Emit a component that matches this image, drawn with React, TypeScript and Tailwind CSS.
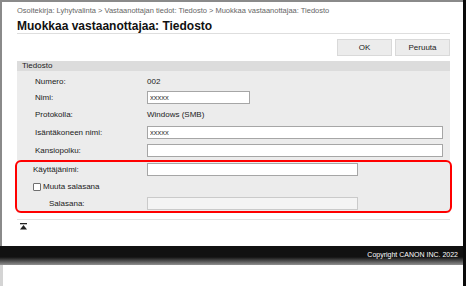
export default function App() {
  const label = "w-[130px] pl-[18px] text-[8px] leading-[10px] text-[#1a1a1a] shrink-0";
  const input = "h-[13px] border border-[#a6a6a6] bg-white px-[2px] text-[7.5px] text-[#333] outline-none font-['Liberation_Sans',Arial,sans-serif]";
  return (
    <div className="w-[466px] h-[286px] overflow-hidden bg-white flex flex-col border-r-[3px] border-[#0a0a0a] font-['Liberation_Sans',Arial,sans-serif]">
      <div className="flex-1 flex flex-col border-t-2 border-l-2 border-[#8a8a8a] pl-[15px] pr-[13px]">
        <div className="mt-[4px] h-[9px] text-[7.5px] leading-[9px] text-[#666] whitespace-nowrap">
          Osoitekirja: Lyhytvalinta &gt; Vastaanottajan tiedot: Tiedosto &gt; Muokkaa vastaanottajaa: Tiedosto
        </div>
        <div className="mt-[4px] h-[15px] border-b border-[#dedede] text-[12px] leading-[14px] font-bold text-[#111] whitespace-nowrap">
          Muokkaa vastaanottajaa: Tiedosto
        </div>
        <div className="mt-[5px] flex justify-end gap-[3px]">
          <button className="w-[55px] h-[17px] bg-[#ececec] border border-[#d9d9d9] text-[8px] text-[#222]">OK</button>
          <button className="w-[55px] h-[17px] bg-[#ececec] border border-[#d9d9d9] text-[8px] text-[#222]">Peruuta</button>
        </div>
        <div className="mt-[5px] flex flex-col">
          <div className="h-[10px] bg-[#dcdcdc] pl-[5px] text-[8px] leading-[10px] text-[#222]">Tiedosto</div>
          <div className="bg-[#ececec] flex flex-col pt-[2px]">
            <div className="h-[18px] flex items-center">
              <span className={label}>Numero:</span>
              <span className="text-[8px] text-[#222]">002</span>
            </div>
            <div className="h-[13px] flex items-center">
              <span className={label}>Nimi:</span>
              <input readOnly defaultValue="xxxxx" className={`${input} w-[103px]`} />
            </div>
            <div className="h-[22px] flex items-center">
              <span className={label}>Protokolla:</span>
              <span className="text-[8px] text-[#222]">Windows (SMB)</span>
            </div>
            <div className="h-[13px] flex items-center pr-[7px]">
              <span className={label}>Isäntäkoneen nimi:</span>
              <input readOnly defaultValue="xxxxx" className={`${input} flex-1 min-w-0`} />
            </div>
            <div className="mt-[5px] h-[13px] flex items-center pr-[7px]">
              <span className={label}>Kansiopolku:</span>
              <input readOnly defaultValue="" className={`${input} flex-1 min-w-0`} />
            </div>
            <div className="mt-[3px] -mx-[2px] border-2 border-[#ff0000] rounded-[6px] pt-[1px] pb-[1px] flex flex-col">
              <div className="h-[13px] flex items-center">
                <span className="w-[130px] pl-[16px] text-[8px] leading-[10px] text-[#1a1a1a] shrink-0">Käyttäjänimi:</span>
                <input readOnly defaultValue="" className={`${input} w-[211px]`} />
              </div>
              <div className="h-[21px] flex items-center pl-[16px]">
                <span className="w-[8px] h-[8px] border border-[#6f6f6f] bg-white rounded-[1px] shrink-0"></span>
                <span className="ml-[2px] text-[8px] leading-[10px] text-[#1a1a1a]">Muuta salasana</span>
              </div>
              <div className="h-[13px] flex items-center">
                <span className="w-[130px] pl-[32px] text-[8px] leading-[10px] text-[#1a1a1a] shrink-0">Salasana:</span>
                <div className="w-[211px] h-[13px] border border-[#cacaca] bg-[#f4f4f4]"></div>
              </div>
            </div>
          </div>
        </div>
        <div className="mt-[6px] border-t border-[#e2e2e2]"></div>
        <div className="mt-[3px] ml-[3px]">
          <svg width="7" height="7" viewBox="0 0 7 7">
            <rect x="0" y="0" width="7" height="1.3" fill="#222" />
            <polygon points="3.5,2 7,6.5 0,6.5" fill="#222" />
          </svg>
        </div>
      </div>
      <div className="h-[19px] shrink-0 bg-[linear-gradient(to_bottom,#111_0px,#111_11px,#909090_19px)] flex justify-end pr-[5px] pt-[4px]">
        <span className="text-[7px] leading-[9px] text-white whitespace-nowrap">Copyright CANON INC. 2022</span>
      </div>
      <div className="h-[21px] shrink-0 border-l-[3px] border-[#d4d4d4] bg-white"></div>
    </div>
  );
}
